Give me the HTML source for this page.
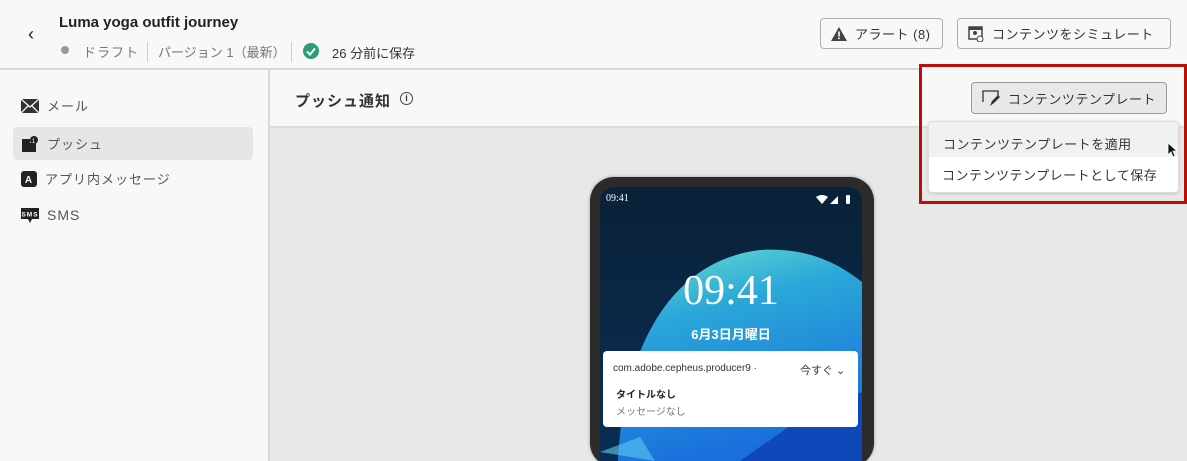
<!DOCTYPE html>
<html><head><meta charset="utf-8"><style>
*{box-sizing:border-box;margin:0;padding:0}
html{width:1187px;height:461px;overflow:hidden}
body{width:1187px;height:461px;overflow:hidden;background:#f8f8f8;font-family:"Liberation Sans","Noto Sans CJK JP",sans-serif;position:relative;color:#2c2c2c}
.a{position:absolute}
.btn{position:absolute;border:1px solid #b0b0b0;border-radius:4px;background:#f8f8f8;font-size:13px;color:#333;display:flex;align-items:center;gap:8px;padding:0 10px;letter-spacing:.5px;white-space:nowrap}
.nav{position:absolute;left:13px;width:240px;height:33px;display:flex;align-items:center;gap:8px;padding-left:8px;font-size:13px;color:#555;letter-spacing:1px}
</style></head><body>
<div class="a" style="left:28px;top:24px;font-size:18px;color:#222">&#8249;</div>
<div class="a" style="left:59px;top:14px;font-size:15px;font-weight:bold;color:#222">Luma yoga outfit journey</div>
<div class="a" style="left:61px;top:46px;width:8px;height:8px;border-radius:50%;background:#999"></div>
<div class="a" style="left:83px;top:42px;font-size:13px;color:#777;letter-spacing:1px">ドラフト</div>
<div class="a" style="left:147px;top:42px;width:1px;height:20px;background:#ccc"></div>
<div class="a" style="left:158px;top:42px;font-size:13px;color:#777">パージョン 1（最新）</div>
<div class="a" style="left:291px;top:42px;width:1px;height:20px;background:#ccc"></div>
<div class="a" style="left:303px;top:43px;width:16px;height:16px;border-radius:50%;background:#2d9d78"><svg width="16" height="16"><path d="M4 8.5l3 3 5-6" stroke="#fff" stroke-width="2" fill="none"/></svg></div>
<div class="a" style="left:332px;top:43px;font-size:13px;color:#333">26 分前に保存</div>
<div class="btn" style="left:820px;top:18px;width:123px;height:31px"><svg width="16" height="14"><path d="M8 0L16 14H0Z" fill="#444"/><rect x="7.2" y="4.5" width="1.6" height="5" fill="#fff"/><rect x="7.2" y="10.5" width="1.6" height="1.6" fill="#fff"/></svg>アラート (8)</div>
<div class="btn" style="left:957px;top:18px;width:214px;height:31px"><svg width="16" height="16"><rect x="1" y="1" width="13" height="12" fill="none" stroke="#444" stroke-width="1.5"/><rect x="1" y="1" width="13" height="3" fill="#444"/><circle cx="7" cy="7" r="2" fill="#444"/><circle cx="12" cy="13" r="3" fill="#f8f8f8" stroke="#444"/></svg>コンテンツをシミュレート</div>
<div class="a" style="left:0;top:68px;width:1187px;height:2px;background:#d8d8d8"></div>
<div class="a" style="left:268px;top:70px;width:2px;height:391px;background:#d8d8d8"></div>
<div class="nav" style="top:89px"><svg width="18" height="14"><rect width="18" height="14" fill="#333"/><path d="M0 0l9 8 9-8M0 14l7-7M18 14l-7-7" stroke="#f8f8f8" stroke-width="1.3" fill="none"/></svg>メール</div>
<div class="nav" style="top:127px;background:#e6e6e6;border-radius:4px"><svg width="18" height="16"><path d="M1 3h8v4h6v9H1z" fill="#222"/><circle cx="13" cy="4" r="4" fill="#222"/><text x="13" y="7" font-size="6" fill="#fff" text-anchor="middle" font-family="Liberation Sans">1</text></svg>プッシュ</div>
<div class="nav" style="top:162px"><svg width="16" height="16"><rect width="16" height="16" rx="3" fill="#222"/><text x="8" y="12" font-size="10" fill="#fff" font-weight="bold" text-anchor="middle" font-family="Liberation Sans">A</text></svg>アプリ内メッセージ</div>
<div class="nav" style="top:198px;font-size:14px"><svg width="18" height="18"><path d="M0 2h18v11H11l-2 4-2-4H0z" fill="#222"/><text x="9" y="10.5" font-size="6.5" fill="#fff" font-weight="bold" text-anchor="middle" font-family="Liberation Sans">SMS</text></svg>SMS</div>
<div class="a" style="left:270px;top:126px;width:917px;height:2px;background:#dcdcdc"></div>
<div class="a" style="left:270px;top:128px;width:917px;height:333px;background:#e8e8e8"></div>
<div class="a" style="left:295px;top:90px;font-size:15px;font-weight:bold;color:#333;letter-spacing:1px">プッシュ通知</div>
<div class="a" style="left:400px;top:92px;width:13px;height:13px;border:1.3px solid #444;border-radius:50%;font-size:9px;text-align:center;line-height:11px;font-weight:bold">i</div>
<div class="a" style="left:590px;top:177px;width:284px;height:290px;border-radius:24px;background:#2b2b2b;box-shadow:0 0 3px #999"></div>
<div class="a" style="left:600px;top:187px;width:262px;height:274px;border-radius:14px 14px 0 0;overflow:hidden;background:#0b2640">
<svg class="a" style="left:0;top:0" width="262" height="274"><defs><linearGradient id="g" x1="0" y1="0" x2="0.3" y2="1"><stop offset="0" stop-color="#6ee0d0"/><stop offset="0.35" stop-color="#2aa8d8"/><stop offset="1" stop-color="#1a6fdc"/></linearGradient><linearGradient id="bg" x1="0" y1="0" x2="0" y2="1"><stop offset="0" stop-color="#0a2238"/><stop offset="1" stop-color="#0a2c55"/></linearGradient></defs>
<rect width="262" height="274" fill="url(#bg)"/>
<path d="M18 274C22 180 60 75 160 63C210 60 240 78 262 95V274Z" fill="url(#g)"/>
<path d="M140 274L210 225L262 205V274Z" fill="#0d3fb0" opacity=".8"/>
<path d="M0 265L40 250L55 274Z" fill="#5ec8f0" opacity=".6"/></svg>
<div class="a" style="left:6px;top:6px;font-family:'Liberation Serif',serif;font-size:10px;color:#fff">09:41</div>
<svg class="a" style="left:216px;top:8px" width="40" height="10"><path d="M0 2Q6-2 12 2L6 9Z" fill="#fff"/><path d="M14 9L22 1V9Z" fill="#fff"/><rect x="30" y="0" width="4" height="9" rx="1" fill="#fff"/></svg>
<div class="a" style="left:0;width:262px;top:80px;text-align:center;font-family:'Liberation Serif',serif;font-size:42px;color:#fff">09:41</div>
<div class="a" style="left:0;width:262px;top:137px;text-align:center;font-size:13px;font-weight:bold;color:#fff">6月3日月曜日</div>
<div class="a" style="left:3px;top:164px;width:255px;height:76px;background:#fff;border-radius:4px">
<div class="a" style="left:10px;top:12px;font-size:10px;color:#333">com.adobe.cepheus.producer9 ·</div>
<div class="a" style="left:197px;top:11px;font-size:11px;color:#333">今すぐ ⌄</div>
<div class="a" style="left:13px;top:35px;font-size:10px;font-weight:bold;color:#222">タイトルなし</div>
<div class="a" style="left:13px;top:52px;font-size:10px;color:#777">メッセージなし</div></div></div>
<div class="a" style="left:919px;top:64px;width:268px;height:140px;border:3px solid #b80f0a;background:#f8f8f8"></div>
<div class="a" style="left:922px;top:126px;width:262px;height:2px;background:#dcdcdc"></div>
<div class="a" style="left:922px;top:128px;width:262px;height:73px;background:#e8e8e8"></div>
<div class="btn" style="left:971px;top:82px;width:196px;height:32px;background:#e8e8e8;border-color:#999"><svg width="18" height="16"><path d="M1 12V1h15v6" fill="none" stroke="#333" stroke-width="1.3"/><path d="M8 16l2-5 6-6 2 2-6 6z" fill="#333"/></svg>コンテンツテンプレート</div>
<div class="a" style="left:928px;top:121px;width:251px;height:72px;background:#fff;border:1px solid #ddd;border-radius:4px;box-shadow:0 1px 3px rgba(0,0,0,.15);overflow:hidden;font-size:13px;color:#333;letter-spacing:.5px;white-space:nowrap">
<div style="height:35px;background:#f1f1f1;padding:12px 0 0 14px">コンテンツテンプレートを適用</div>
<div style="padding:8px 0 0 13px">コンテンツテンプレートとして保存</div></div>
<svg class="a" style="left:1167px;top:142px" width="12" height="16"><path d="M1 1v12l3-3 2 5 2-1-2-5h4z" fill="#111" stroke="#fff" stroke-width=".8"/></svg>
</body></html>
